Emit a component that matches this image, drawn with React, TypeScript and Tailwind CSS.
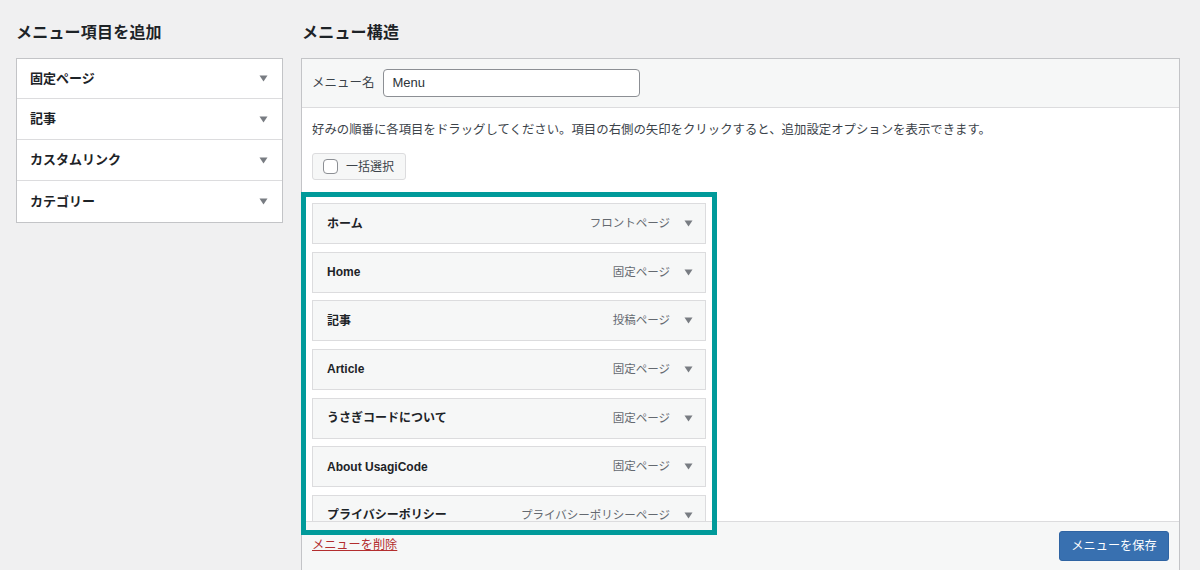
import React from "react";

const font = { fontFamily: '"Liberation Sans", "Noto Sans CJK JP", sans-serif' };

function Arrow() {
  return (
    <svg width="9" height="7" viewBox="0 0 9 7" className="shrink-0">
      <path d="M0.5 0.5 L8.5 0.5 L4.5 6.5 Z" fill="#787c82" />
    </svg>
  );
}

const leftItems = ["固定ページ", "記事", "カスタムリンク", "カテゴリー"];

const menuItems: [string, string][] = [
  ["ホーム", "フロントページ"],
  ["Home", "固定ページ"],
  ["記事", "投稿ページ"],
  ["Article", "固定ページ"],
  ["うさぎコードについて", "固定ページ"],
  ["About UsagiCode", "固定ページ"],
  ["プライバシーポリシー", "プライバシーポリシーページ"],
];

export default function App() {
  return (
    <div
      className="h-[570px] w-[1200px] overflow-hidden bg-[#f0f0f1] text-[#1d2327] flex pl-[16px] pr-[20px] pt-[24px] gap-[18px]"
      style={font}
    >
      {/* Left column */}
      <div className="w-[267px] shrink-0">
        <h2 className="text-[16px] font-bold leading-[18px] h-[18px] mb-[16px] tracking-[0.2px]">メニュー項目を追加</h2>
        <div className="border border-[#c3c4c7] bg-white divide-y divide-[#dcdcde]">
          {leftItems.map((t) => (
            <div key={t} className="h-[41px] first:h-[40px] flex items-center justify-between pl-[13px] pr-[14px]">
              <span className="text-[13px] font-bold">{t}</span>
              <Arrow />
            </div>
          ))}
        </div>
      </div>

      {/* Right column */}
      <div className="flex-1">
        <h2 className="text-[16px] font-bold leading-[18px] h-[18px] mb-[16px] pl-[1px] tracking-[0.2px]">メニュー構造</h2>
        <div className="relative h-[524px] border border-[#c3c4c7] bg-white flex flex-col">
          <div className="h-[49px] shrink-0 bg-[#f6f7f7] border-b border-[#dcdcde] flex items-center pl-[10px]">
            <span className="text-[12.5px] text-[#3c434a] mr-[8px]">メニュー名</span>
            <div className="w-[257px] h-[28px] border border-[#8c8f94] rounded-[4px] bg-white flex items-center px-[9px] text-[13px] text-[#2c3338]">
              Menu
            </div>
          </div>
          <div className="flex-1 overflow-hidden pl-[10px] pt-[13px]">
            <p className="text-[12.4px] leading-[18px] text-[#3c434a]">
              好みの順番に各項目をドラッグしてください。項目の右側の矢印をクリックすると、追加設定オプションを表示できます。
            </p>
            <div className="mt-[14px] w-[94px] h-[27px] border border-[#dcdcde] bg-[#f6f7f7] rounded-[3px] flex items-center pl-[10px] gap-[8px]">
              <div className="w-[15px] h-[15px] border border-[#8c8f94] rounded-[4px] bg-white" />
              <span className="text-[12px] text-[#3c434a]">一括選択</span>
            </div>
            <div className="mt-[23px] w-[394px] flex flex-col gap-[7.67px]">
              {menuItems.map(([a, b]) => (
                <div
                  key={a}
                  className="h-[41px] shrink-0 border border-[#dcdcde] bg-[#f6f7f7] flex items-center justify-between pl-[14px] pr-[12px]"
                >
                  <span className="text-[12px] font-bold text-[#1d2327]">{a}</span>
                  <div className="flex items-center gap-[14px]">
                    <span className="text-[11.5px] text-[#646970]">{b}</span>
                    <Arrow />
                  </div>
                </div>
              ))}
            </div>
          </div>
          <div className="h-[60px] shrink-0 border-t border-[#dcdcde] bg-[#f6f7f7] flex items-start justify-between pl-[10px] pr-[10px] pt-[9px]">
            <a className="text-[12.2px] text-[#b32d2e] underline mt-[5px] leading-[18px]">メニューを削除</a>
            <div className="w-[110px] h-[30px] rounded-[3px] bg-[#3870b0] border border-[#2f64a3] text-white text-[12.2px] flex items-center justify-center">
              メニューを保存
            </div>
          </div>

          {/* Annotation frame */}
          <div className="absolute left-[-1px] top-[133px] w-[416px] h-[343px] border-[5px] border-[#009a9a] pointer-events-none" />
        </div>
      </div>
    </div>
  );
}
